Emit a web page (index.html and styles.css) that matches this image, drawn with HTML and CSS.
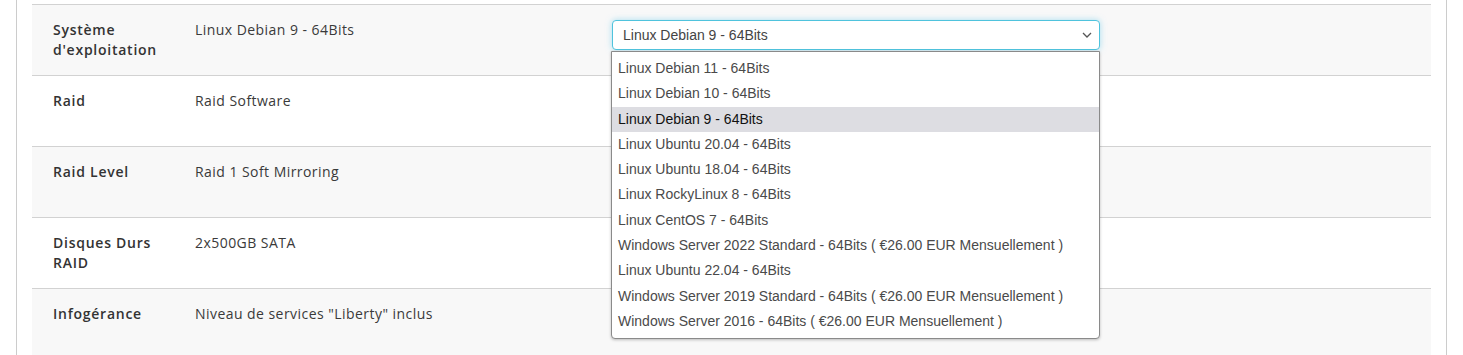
FILE: index.html
```html
<!DOCTYPE html>
<html lang="fr">
  <head>
    <meta charset="utf-8" />
    <title>Configuration du serveur</title>
    <link rel="stylesheet" href="styles.css">
  </head>
  <body>
    <div class="panel">
      <div class="specs">
        <div class="row shade">
          <div class="label">Système d'exploitation</div>
          <div class="value">Linux Debian 9 - 64Bits</div>
          <div class="field">
            <div class="select">
              <span>Linux Debian 9 - 64Bits</span>
              <svg class="chevron" width="10" height="6" viewBox="0 0 10 6"><path d="M1 1 L5 5 L9 1" fill="none" stroke="#555" stroke-width="1.3"/></svg>
              <ul class="options">
                <li>Linux Debian 11 - 64Bits</li>
                <li>Linux Debian 10 - 64Bits</li>
                <li class="current">Linux Debian 9 - 64Bits</li>
                <li>Linux Ubuntu 20.04 - 64Bits</li>
                <li>Linux Ubuntu 18.04 - 64Bits</li>
                <li>Linux RockyLinux 8 - 64Bits</li>
                <li>Linux CentOS 7 - 64Bits</li>
                <li>Windows Server 2022 Standard - 64Bits ( €26.00 EUR Mensuellement )</li>
                <li>Linux Ubuntu 22.04 - 64Bits</li>
                <li>Windows Server 2019 Standard - 64Bits ( €26.00 EUR Mensuellement )</li>
                <li>Windows Server 2016 - 64Bits ( €26.00 EUR Mensuellement )</li>
              </ul>
            </div>
          </div>
        </div>
        <div class="row">
          <div class="label">Raid</div>
          <div class="value">Raid Software</div>
        </div>
        <div class="row shade">
          <div class="label">Raid Level</div>
          <div class="value">Raid 1 Soft Mirroring</div>
        </div>
        <div class="row">
          <div class="label">Disques Durs RAID</div>
          <div class="value">2x500GB SATA</div>
        </div>
        <div class="row shade">
          <div class="label">Infogérance</div>
          <div class="value">Niveau de services "Liberty" inclus</div>
        </div>
      </div>
    </div>
  </body>
</html>
```

FILE: styles.css
```css
html, body { margin: 0; background: #fff; }
body { font-family: "Open Sans", "Noto Sans", sans-serif; font-size: 14px; color: #333; }

.panel { margin: 0 16px; padding: 4px 15px 0; border-left: 1px solid #ccc; border-right: 1px solid #ccc; height: 351px; }
.specs { border-top: 1px solid #d2d2d2; }

.row { display: grid; grid-template-columns: 142px 417px 488px; height: 71px; padding: 15px 0 0 21px; box-sizing: border-box; border-bottom: 1px solid #d2d2d2; line-height: 20px; }
.row:last-child { border-bottom: none; }
.shade { background: #f8f8f8; }
.label { font-weight: 600; color: #333; letter-spacing: 0.75px; padding-right: 14px; }
.value { color: #3a3a3a; letter-spacing: 0.45px; }

.select { position: relative; height: 30px; box-sizing: border-box; border: 1px solid #4fc3dd; border-radius: 4px; background: #fff;
  box-shadow: 0 0 6px rgba(102, 200, 233, 0.55); display: flex; align-items: center; padding: 0 10px; font-family: "Liberation Sans", Arial, sans-serif; font-size: 14px; color: #444; }
.select span { flex: 1; }
.chevron { margin-right: -3px; }

.options { position: absolute; top: 30px; left: -2px; width: 487px; margin: 0; padding: 4px 0 4px; list-style: none; background: #fff;
  border: 1px solid #8a8a8a; border-radius: 0 0 4px 4px; box-shadow: 0 1px 3px rgba(0, 0, 0, 0.25); z-index: 2; }
.options li { height: 25.3px; line-height: 25px; padding-left: 6px; color: #4a4a4a; white-space: nowrap; }
.options li.current { background: #dddde2; color: #111; }
```
